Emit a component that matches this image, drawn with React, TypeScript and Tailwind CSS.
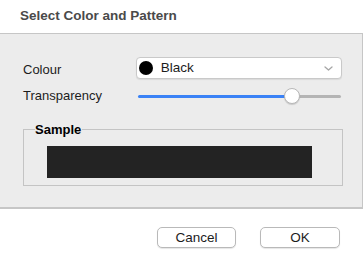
import React from "react";

export default function App() {
  return (
    <div className="w-[364px] h-[262px] bg-white font-['Liberation_Sans',Arial,sans-serif] text-[13px] text-[#1c1c1c] overflow-hidden">
      <div className="h-[33px] pl-[20px] flex items-center font-bold text-[13.5px] text-[#4a4a4a]">
        Select Color and Pattern
      </div>
      <div className="h-[176px] w-[363px] bg-[#ececec] border-t border-r border-b-2 border-[#c6c6c6] pl-[23px] pr-[20px] pt-[23px]">
        <div className="flex items-center h-[22px]">
          <span className="w-[113px] pt-[4px]">Colour</span>
          <div className="w-[207px] h-[22px] bg-white border border-[#c9c9c9] rounded-[4px] shadow-[0_1px_1px_rgba(0,0,0,0.08)] flex items-center pl-[2px] pr-[6px]">
            <span className="w-[14px] h-[14px] rounded-full bg-black"></span>
            <span className="ml-[8px] flex-1 pt-[1px] text-[13.5px]">Black</span>
            <svg width="9" height="5" viewBox="0 0 9 5" className="mr-[2px]">
              <path d="M1 1 L4.5 4 L8 1" stroke="#a6a6a6" strokeWidth="1.3" fill="none" strokeLinecap="round" strokeLinejoin="round" />
            </svg>
          </div>
        </div>
        <div className="flex items-center h-[18px] mt-[8px]">
          <span className="w-[115px]">Transparency</span>
          <div className="relative w-[203px] h-[18px] flex items-center">
            <div className="h-[3px] w-[154px] bg-[#3a82f6] rounded-l-full"></div>
            <div className="h-[3px] flex-1 bg-[#b4b4b4] rounded-r-full"></div>
            <div className="absolute left-[146px] top-[1px] w-[16px] h-[16px] rounded-full bg-white border border-[#b8b8b8] shadow-[0_1px_1px_rgba(0,0,0,0.15)]"></div>
          </div>
        </div>
        <div className="relative mt-[24px] w-[320px] h-[57px] border border-[#c4c4c4] pt-[16px] pl-[23px]">
          <span className="absolute left-[11px] top-[-8px] font-bold text-[13px] leading-[15px] bg-[#ececec] pr-[1px] text-black">Sample</span>
          <div className="w-[265px] h-[32px] bg-[#232323]"></div>
        </div>
      </div>
      <div className="flex justify-end gap-[24px] pr-[24px] pt-[18px]">
        <button className="w-[79px] h-[21px] bg-white border border-[#b9b9b9] rounded-[5px] shadow-[0_1px_1px_rgba(0,0,0,0.1)] text-[13.5px] leading-none text-[#1c1c1c]">Cancel</button>
        <button className="w-[80px] h-[21px] bg-white border border-[#b9b9b9] rounded-[5px] shadow-[0_1px_1px_rgba(0,0,0,0.1)] text-[13.5px] leading-none text-[#1c1c1c]">OK</button>
      </div>
    </div>
  );
}
